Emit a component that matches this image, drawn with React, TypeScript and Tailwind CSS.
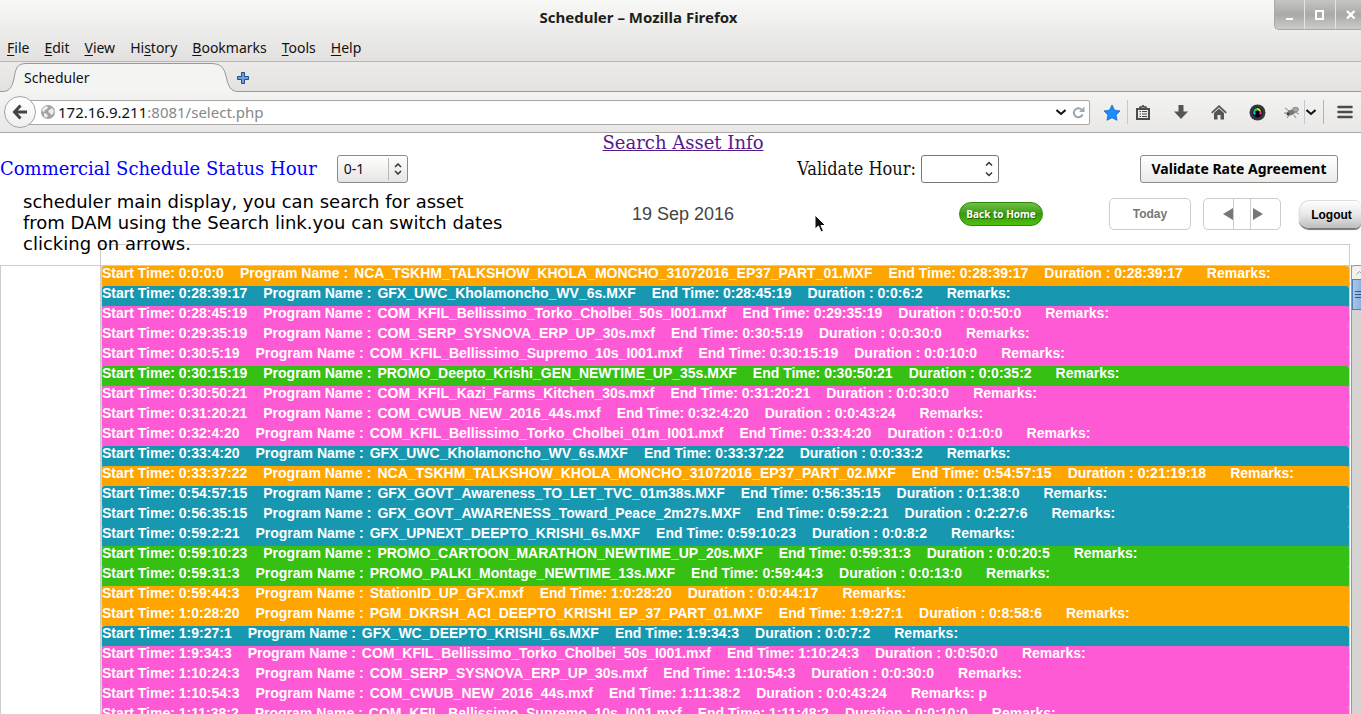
import { type ReactNode } from "react";

type Kind = "program" | "gfx" | "com" | "promo";
type Entry = [kind: Kind, start: string, name: string, end: string, duration: string, remarks?: string];

const kindColor: Record<Kind, string> = {
  program: "bg-[#ffa500]",
  gfx: "bg-[#1897b1]",
  com: "bg-[#ff5ad5]",
  promo: "bg-[#35c013]",
};

const entries: Entry[] = [
  ["program", "0:0:0:0", "NCA_TSKHM_TALKSHOW_KHOLA_MONCHO_31072016_EP37_PART_01.MXF", "0:28:39:17", "0:28:39:17"],
  ["gfx", "0:28:39:17", "GFX_UWC_Kholamoncho_WV_6s.MXF", "0:28:45:19", "0:0:6:2"],
  ["com", "0:28:45:19", "COM_KFIL_Bellissimo_Torko_Cholbei_50s_I001.mxf", "0:29:35:19", "0:0:50:0"],
  ["com", "0:29:35:19", "COM_SERP_SYSNOVA_ERP_UP_30s.mxf", "0:30:5:19", "0:0:30:0"],
  ["com", "0:30:5:19", "COM_KFIL_Bellissimo_Supremo_10s_I001.mxf", "0:30:15:19", "0:0:10:0"],
  ["promo", "0:30:15:19", "PROMO_Deepto_Krishi_GEN_NEWTIME_UP_35s.MXF", "0:30:50:21", "0:0:35:2"],
  ["com", "0:30:50:21", "COM_KFIL_Kazi_Farms_Kitchen_30s.mxf", "0:31:20:21", "0:0:30:0"],
  ["com", "0:31:20:21", "COM_CWUB_NEW_2016_44s.mxf", "0:32:4:20", "0:0:43:24"],
  ["com", "0:32:4:20", "COM_KFIL_Bellissimo_Torko_Cholbei_01m_I001.mxf", "0:33:4:20", "0:1:0:0"],
  ["gfx", "0:33:4:20", "GFX_UWC_Kholamoncho_WV_6s.MXF", "0:33:37:22", "0:0:33:2"],
  ["program", "0:33:37:22", "NCA_TSKHM_TALKSHOW_KHOLA_MONCHO_31072016_EP37_PART_02.MXF", "0:54:57:15", "0:21:19:18"],
  ["gfx", "0:54:57:15", "GFX_GOVT_Awareness_TO_LET_TVC_01m38s.MXF", "0:56:35:15", "0:1:38:0"],
  ["gfx", "0:56:35:15", "GFX_GOVT_AWARENESS_Toward_Peace_2m27s.MXF", "0:59:2:21", "0:2:27:6"],
  ["gfx", "0:59:2:21", "GFX_UPNEXT_DEEPTO_KRISHI_6s.MXF", "0:59:10:23", "0:0:8:2"],
  ["promo", "0:59:10:23", "PROMO_CARTOON_MARATHON_NEWTIME_UP_20s.MXF", "0:59:31:3", "0:0:20:5"],
  ["promo", "0:59:31:3", "PROMO_PALKI_Montage_NEWTIME_13s.MXF", "0:59:44:3", "0:0:13:0"],
  ["program", "0:59:44:3", "StationID_UP_GFX.mxf", "1:0:28:20", "0:0:44:17"],
  ["program", "1:0:28:20", "PGM_DKRSH_ACI_DEEPTO_KRISHI_EP_37_PART_01.MXF", "1:9:27:1", "0:8:58:6"],
  ["gfx", "1:9:27:1", "GFX_WC_DEEPTO_KRISHI_6s.MXF", "1:9:34:3", "0:0:7:2"],
  ["com", "1:9:34:3", "COM_KFIL_Bellissimo_Torko_Cholbei_50s_I001.mxf", "1:10:24:3", "0:0:50:0"],
  ["com", "1:10:24:3", "COM_SERP_SYSNOVA_ERP_UP_30s.mxf", "1:10:54:3", "0:0:30:0"],
  ["com", "1:10:54:3", "COM_CWUB_NEW_2016_44s.mxf", "1:11:38:2", "0:0:43:24", "p"],
  ["com", "1:11:38:2", "COM_KFIL_Bellissimo_Supremo_10s_I001.mxf", "1:11:48:2", "0:0:10:0"],
];

const menus: [string, string, string][] = [
  ["", "F", "ile"],
  ["", "E", "dit"],
  ["", "V", "iew"],
  ["Hi", "s", "tory"],
  ["", "B", "ookmarks"],
  ["", "T", "ools"],
  ["", "H", "elp"],
];

function ToolButton({ label, className, children }: { label: string; className: string; children: ReactNode }) {
  return (
    <button aria-label={label} className={`flex h-6 shrink-0 items-center justify-center ${className}`}>
      {children}
    </button>
  );
}

function Chevron() {
  return (
    <svg width="10" height="7" viewBox="0 0 10 7" fill="none" stroke="#111" strokeWidth="2">
      <path d="M0.5 1 L5 5 L9.5 1" />
    </svg>
  );
}

function TitleBar() {
  return (
    <header className="relative h-[62px] shrink-0 border-b border-[#b8b7b5] bg-linear-to-b from-[#f8f8f6] to-[#e2e1df] pt-2">
      <h1 className="pr-[84px] text-center font-['Noto_Sans',sans-serif] text-[15px] leading-[18px] font-bold text-[#1c1f20]">
        Scheduler – Mozilla Firefox
      </h1>
      <div className="absolute top-0 right-0 flex h-[30px] w-[87px] overflow-hidden rounded-bl-[5px] border-b border-l border-[#a9a8a6] bg-linear-to-b from-[#c6c5c3] via-[#a9a9a8] to-[#cdccca]">
        <button aria-label="Minimize" className="flex w-[30px] shrink-0 items-center justify-center border-r border-[#e4e4e2]">
          <svg width="9" height="12" viewBox="0 0 9 12"><path d="M1 10h7" stroke="#fff" strokeWidth="2" /></svg>
        </button>
        <button aria-label="Maximize" className="flex w-[31px] shrink-0 items-center justify-center border-r border-[#e4e4e2]">
          <svg width="10" height="10" viewBox="0 0 10 10"><path d="M1 1h7v8h-7z" fill="none" stroke="#fff" strokeWidth="2" /></svg>
        </button>
        <button aria-label="Close" className="flex w-[30px] shrink-0 items-center justify-center">
          <svg width="10" height="10" viewBox="0 0 10 10"><path d="M1 1 8.5 8.5M8.5 1 1 8.5" stroke="#fff" strokeWidth="2.4" /></svg>
        </button>
      </div>
      <nav className="mt-3 flex gap-[15px] pl-[7px]">
        {menus.map(([pre, key, post]) => (
          <button key={key + post} className="font-['Noto_Sans',sans-serif] text-[14px] leading-5 text-[#111]">
            {pre}
            <span className="underline underline-offset-2">{key}</span>
            {post}
          </button>
        ))}
      </nav>
    </header>
  );
}

function TabStrip() {
  return (
    <div className="flex h-[30px] shrink-0 bg-linear-to-b from-[#ecebe9] to-[#e3e2e0]">
      <div className="relative h-[30px] w-[237px] shrink-0">
        <svg className="absolute inset-0" width="238" height="30" viewBox="0 0 238 30">
          <path d="M0 29.5H3C11 29.5 13 22 14.500 14C16 5 18 1.500 27 1.500H211C221 1.500 224 6 226 14C228 23 230 29.500 238 29.500V30H0Z" fill="#f4f4f3" />
          <path d="M0 29.5H3C11 29.5 13 22 14.500 14C16 5 18 1.500 27 1.500H211C221 1.500 224 6 226 14C228 23 230 29.500 238 29.500" fill="none" stroke="#999896" />
        </svg>
        <button className="relative pl-6 font-['Noto_Sans',sans-serif] text-[14px] leading-8 text-[#111]">Scheduler</button>
      </div>
      <div className="flex grow items-center border-b border-[#999896]">
        <button aria-label="Open a new tab" className="mt-0.5">
          <svg width="12" height="12" viewBox="0 0 12 12">
            <path d="M4.500 .5h3v4h4v3h-4v4h-3v-4h-4v-3h4z" fill="#6f9fd6" stroke="#1f4f93" />
          </svg>
        </button>
      </div>
    </div>
  );
}

function NavBar() {
  return (
    <div className="flex h-[41px] shrink-0 items-center border-b border-[#a9a8a6] bg-linear-to-b from-[#f3f3f2] to-[#e9e8e7] pl-1">
      <button aria-label="Back" className="z-10 flex size-8 shrink-0 items-center justify-center rounded-full border border-[#9aa5b2] bg-linear-to-b from-white to-[#f0f0f0]">
        <svg width="16" height="16" viewBox="0 0 16 16" fill="none" stroke="#444" strokeWidth="3">
          <path d="M8.500 1.500 2.500 8l6 6.500M3 8h12" />
        </svg>
      </button>
      <div className="-ml-2 flex h-[25px] min-w-0 grow items-center rounded-r-[2px] border border-[#a9a8a6] bg-white pl-3">
        <svg width="14" height="14" viewBox="0 0 14 14" className="shrink-0">
          <circle cx="7" cy="7" r="7" fill="#a3a3a3" />
          <path d="M2 3 5 1 7 2 6 4 4 5 3 7 1 6ZM8 5 11 3 13 6 12 9 10 10 9 8 7 7ZM3 8 6 9 7 11 5 13 3 11Z" fill="#ededed" />
        </svg>
        <span className="grow pl-[3px] font-['Noto_Sans',sans-serif] text-[15px] leading-5 text-[#888]">
          <span className="text-[#111]">172.16.9.211</span>:8081/select.php
        </span>
        <button aria-label="Show history" className="px-1.5"><Chevron /></button>
        <button aria-label="Reload" className="pr-1">
          <svg width="13" height="13" viewBox="0 0 13 13" fill="none">
            <path d="M10.500 8.500A4.500 4.500 0 1 1 9.500 3.500" stroke="#9aa5b2" strokeWidth="2" />
            <path d="M12.500 .5V6H7Z" fill="#9aa5b2" />
          </svg>
        </button>
      </div>
      <ToolButton label="Bookmark this page" className="ml-3 w-5">
        <svg width="18" height="17" viewBox="0 0 18 17">
          <path d="M9 1 11.500 6.200 17 7 13 10.900 14 16.300 9 13.700 4 16.300 5 10.900 1 7 6.500 6.200Z" fill="#1a8cff" stroke="#1168c4" strokeWidth=".8" />
        </svg>
      </ToolButton>
      <ToolButton label="Bookmarks" className="ml-[5px] w-[31px] border-l border-[#c2c8cf]">
        <svg width="14" height="15" viewBox="0 0 14 15" fill="none" stroke="#4c4c4c">
          <path d="M1 4h12v10H1z" strokeWidth="2" />
          <path d="M4 3V2h2L7 .5 8 2h2v1" strokeWidth="1.500" />
          <path d="M3.500 6.500H5M6 6.500h5M3.500 9H5M6 9h5M3.500 11.500H5M6 11.500h5" strokeWidth="1.200" />
        </svg>
      </ToolButton>
      <ToolButton label="Downloads" className="ml-2 w-[30px]">
        <svg width="14" height="14" viewBox="0 0 14 14"><path d="M4.500 0h5v6.500H14L7 14 0 6.500h4.500Z" fill="#555" /></svg>
      </ToolButton>
      <ToolButton label="Home" className="ml-2 w-[30px]">
        <svg width="16" height="15" viewBox="0 0 16 15" fill="none">
          <path d="M.8 7.800 8 1.200 15.200 7.800" stroke="#555" strokeWidth="1.800" />
          <path d="M3 8 8 3.500 13 8v6.500H9.500V10h-3v4.500H3Z" fill="#555" />
        </svg>
      </ToolButton>
      <ToolButton label="Color picker" className="ml-2 w-[30px]">
        <svg width="17" height="17" viewBox="0 0 17 17" fill="none">
          <circle cx="8.500" cy="8.500" r="8" fill="#333840" />
          <circle cx="8.500" cy="8.500" r="5" fill="#050505" />
          <g strokeWidth="2.200">
            <path d="M6 10.500A3.200 3.200 0 0 1 5.500 7" stroke="#18b4e8" />
            <path d="M5.500 7A3.500 3.500 0 0 1 8 5.200" stroke="#20d070" />
            <path d="M8 5.200A3.500 3.500 0 0 1 11.200 7" stroke="#d8e020" />
            <path d="M11.200 7A3.500 3.500 0 0 1 11.200 10.500" stroke="#e83090" />
          </g>
        </svg>
      </ToolButton>
      <ToolButton label="Firebug" className="ml-2 w-[24px]">
        <svg width="16" height="13" viewBox="0 0 16 13" fill="none" stroke="#666">
          <path d="M1 2 5 5M0 7 5 7M3 12 6 8M10 9 12 12M11 6 15 8" strokeWidth=".8" />
          <ellipse cx="7" cy="6.500" rx="4" ry="2.600" fill="#777" stroke="none" transform="rotate(-20 7 6.500)" />
          <ellipse cx="11.500" cy="3.500" rx="3" ry="2.200" fill="#aaa" stroke="#777" strokeWidth=".8" />
          <circle cx="4" cy="8" r="1.500" fill="#444" stroke="none" />
        </svg>
      </ToolButton>
      <ToolButton label="Firebug options" className="w-[19px] border-l border-[#c2c8cf] pr-1.5"><Chevron /></ToolButton>
      <ToolButton label="Open menu" className="w-[38px] border-l border-[#aab4bf] pl-1">
        <svg width="16" height="14" viewBox="0 0 16 14" stroke="#4c4c4c" strokeWidth="2.600" strokeLinecap="round">
          <path d="M1.500 2h13M1.500 7h13M1.500 12h13" />
        </svg>
      </ToolButton>
    </div>
  );
}

function UpDown({ spread }: { spread?: boolean }) {
  return (
    <svg width="8" height={spread ? 16 : 12} viewBox={spread ? "0 0 8 16" : "0 0 8 12"} fill="none" stroke="#333" strokeWidth="1.500">
      <path d={spread ? "M1 4.500 4 1.500 7 4.500M1 11.500 4 14.500 7 11.500" : "M1 4 4 1 7 4M1 8 4 11 7 8"} />
    </svg>
  );
}

function Filters() {
  return (
    <form className="flex items-center pr-[23px] text-[18px] leading-5">
      <label htmlFor="status-hour" className="font-['DejaVu_Serif',serif] text-[#0000ff]">Commercial Schedule Status Hour</label>
      <div className="relative ml-5">
        <select
          id="status-hour"
          className="block h-7 w-[71px] appearance-none rounded-[3px] border border-[#8c8b89] bg-linear-to-b from-white to-[#e6e5e3] pl-[6px] font-['Noto_Sans',sans-serif] text-[14px] text-[#111]"
        >
          <option>0-1</option>
          <option>1-2</option>
        </select>
        <div className="pointer-events-none absolute inset-y-[3px] right-0 flex w-5 items-center justify-center border-l border-[#b8b7b5]">
          <UpDown />
        </div>
      </div>
      <div className="grow" />
      <label htmlFor="validate-hour" className="font-['DejaVu_Serif_Condensed','DejaVu_Serif',serif] text-[#111]">Validate Hour:</label>
      <div className="relative ml-[5px]">
        <input
          id="validate-hour"
          inputMode="numeric"
          className="block h-7 w-[78px] rounded-[3px] border border-[#777] bg-white px-2 font-['Noto_Sans',sans-serif] text-[14px]"
        />
        <div className="pointer-events-none absolute inset-y-0 right-0 flex w-5 items-center justify-center">
          <UpDown spread />
        </div>
      </div>
      <button
        type="button"
        className="ml-[141px] h-7 w-[198px] rounded-[3px] border border-[#8c8b89] bg-linear-to-b from-white to-[#ebeae8] font-['Noto_Sans',sans-serif] text-[14px] font-bold text-black"
      >
        Validate Rate Agreement
      </button>
    </form>
  );
}

function DateBar() {
  return (
    <div className="grid grid-cols-[1fr_auto_1fr] items-center pt-[15px] font-['Liberation_Sans',sans-serif]">
      <h2 className="col-start-2 pl-[5px] text-[18px] leading-5 text-[#444]">19 Sep 2016</h2>
      <div className="flex items-center justify-end">
        <button className="mr-[66px] h-[24px] w-[84px] rounded-full border border-[#2f8a08] bg-linear-to-b from-[#6fc043] via-[#3a9a0c] to-[#4fc010] font-['Open_Sans',sans-serif] text-[10px] leading-5 font-bold whitespace-nowrap text-white text-shadow-[1px_1px_1px_#1c5a04]">
          Back to Home
        </button>
        <button className="mr-3 h-8 w-[82px] rounded-[5px] border border-[#ccc] bg-white text-[12px] font-bold text-[#777]">Today</button>
        <div className="mr-[18px] flex h-8 w-[78px] rounded-[5px] border border-[#ccc] bg-white">
          <button aria-label="Previous day" className="flex w-[30px] items-center justify-end border-r border-[#ccc]">
            <svg width="10" height="12" viewBox="0 0 10 12"><path d="M10 0v12L0 6z" fill="#777" /></svg>
          </button>
          <div className="w-4" />
          <button aria-label="Next day" className="flex grow items-center border-l border-[#ccc] pl-0.5">
            <svg width="10" height="12" viewBox="0 0 10 12"><path d="M0 0v12l10-6z" fill="#777" /></svg>
          </button>
        </div>
        <button className="h-7 w-[62px] rounded-l-[10px] rounded-r-[6px] border-t border-l border-[#ddd] bg-linear-to-b from-white via-[#e8e8e8] to-[#bdbdbd] pl-0.5 text-[12px] font-bold text-black shadow-[0_2px_1px_#777]">
          Logout
        </button>
      </div>
    </div>
  );
}

function Schedule() {
  return (
    <section className="flex min-h-0 grow flex-col">
      <div className="mr-[11px] ml-[100px] h-[21px] shrink-0 border border-b-0 border-[#ccc]" />
      <div className="flex min-h-0 grow border-l border-[#ccc]">
        <div className="w-[100px] shrink-0 border-t border-r border-[#ccc]" />
        <ul className="min-w-0 grow overflow-hidden border-t border-[#ccc] bg-[#b9dcea] pl-px">
          {entries.map(([kind, start, name, end, duration, remarks]) => (
            <li
              key={start}
              className={`-mb-0.5 flex h-[22px] rounded-[3px] font-['Liberation_Sans',sans-serif] text-[14px] leading-[14px] font-bold whitespace-nowrap text-white ${kindColor[kind]}`}
            >
              <span className="mr-4">Start Time: {start}</span>
              <span className="mr-1.5">Program Name :</span>
              <span className="mr-4">{name}</span>
              <span className="mr-4">End Time: {end}</span>
              <span className="mr-6">Duration : {duration}</span>
              <span>Remarks: {remarks}</span>
            </li>
          ))}
        </ul>
        <div className="w-px shrink-0 bg-[#ccc]" />
        <div className="ml-px w-[10px] shrink-0 overflow-hidden border-l border-[#9a9997] bg-[#d5d4d2]">
          <div className="flex h-[14px] w-[14px] items-center justify-center rounded-tl-[3px] border-t border-[#9a9997] bg-[#f2f1f0]">
            <svg width="7" height="4" viewBox="0 0 7 4" fill="none" stroke="#999"><path d="M.5 3.500 3.500 .5 6.500 3.500" /></svg>
          </div>
          <div className="flex h-[31px] w-[14px] items-center justify-end border border-[#5680b4] bg-linear-to-r from-[#a9c6ea] to-[#7fa7d8]">
            <svg width="10" height="7" viewBox="0 0 10 7" stroke="#33598c"><path d="M0 .5h9M0 3.500h9M0 6.500h9" /></svg>
          </div>
        </div>
      </div>
    </section>
  );
}

export default function App() {
  return (
    <div className="flex h-screen flex-col overflow-hidden bg-white">
      <TitleBar />
      <TabStrip />
      <NavBar />
      <main className="relative flex min-h-0 grow flex-col">
        <div className="pb-[3px] pl-[5px] text-center font-['DejaVu_Serif',serif] text-[18px] leading-[19px]">
          <a href="#search" className="text-[#551a8b] underline">Search Asset Info</a>
        </div>
        <Filters />
        <DateBar />
        <div className="h-[14px] shrink-0" />
        <Schedule />
        <p className="absolute top-[58px] left-[23px] font-['DejaVu_Sans',sans-serif] text-[18px] leading-[21px] whitespace-nowrap text-black">
          scheduler main display, you can search for asset
          <br />
          from DAM using the Search link.you can switch dates
          <br />
          clicking on arrows.
        </p>
        <svg className="absolute top-[81px] left-[814px]" width="13" height="20" viewBox="0 0 13 20">
          <path d="M1 1v14l3.500-3 2.500 6 2.500-1-2.500-5.500h4.500Z" fill="#111" stroke="#fff" />
        </svg>
      </main>
    </div>
  );
}
